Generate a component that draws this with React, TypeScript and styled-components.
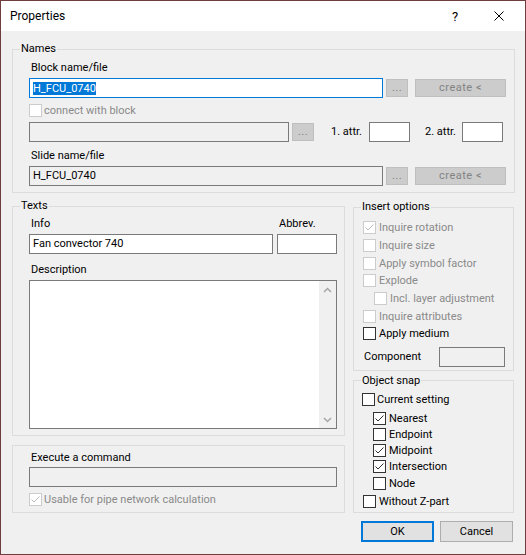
import React from "react";
import styled, { createGlobalStyle } from "styled-components";

const GlobalStyle = createGlobalStyle`
  * { box-sizing: border-box; }
  html, body { margin: 0; padding: 0; background: #f0f0f0; }
  body {
    font-family: Roboto, "Liberation Sans", Arial, sans-serif;
    font-size: 11px;
    color: #000;
  }
`;

const Window = styled.div`
  width: 526px;
  height: 555px;
  border: 1px solid #6e3d3d;
  background: #f0f0f0;
  display: flex;
  flex-direction: column;
  overflow: hidden;
`;

const TitleBar = styled.div`
  height: 30px;
  flex: none;
  background: #fff;
  display: flex;
  align-items: center;
  padding: 0 4px 0 9px;
`;

const Title = styled.div`
  flex: 1;
  font-size: 12px;
  line-height: 16px;
`;

const CaptionButton = styled.div`
  width: 44px;
  height: 30px;
  display: flex;
  align-items: center;
  justify-content: center;
  font-size: 13px;
`;

const Body = styled.div`
  flex: 1;
  padding: 10px 10px 0 11px;
  display: flex;
  flex-direction: column;
`;

const Group = styled.fieldset<{ $mt?: number }>`
  margin: ${(p) => p.$mt ?? 0}px 0 0;
  padding: 0;
  border: 1px solid #dcdcdc;
  min-width: 0;
`;

const Legend = styled.legend`
  margin-left: 7px;
  padding: 0 1px;
  font-size: 11px;
  line-height: 16px;
`;

const Content = styled.div<{ $pad: string }>`
  padding: ${(p) => p.$pad};
  display: flex;
  flex-direction: column;
`;

const Label = styled.div<{ $mt?: number }>`
  margin-top: ${(p) => p.$mt ?? 0}px;
  padding: 1px 0 0 2px;
  height: 16px;
  line-height: 15px;
  white-space: nowrap;
`;

const Row = styled.div<{ $mt?: number }>`
  display: flex;
  align-items: center;
  height: 20px;
  margin-top: ${(p) => p.$mt ?? 0}px;
`;

type Tone = "focus" | "white" | "flat";

const Field = styled.div<{ $w?: number; $tone?: Tone; $ml?: number }>`
  flex: none;
  width: ${(p) => (p.$w ? `${p.$w}px` : "auto")};
  height: 20px;
  margin-left: ${(p) => p.$ml ?? 0}px;
  padding-left: 3px;
  display: flex;
  align-items: center;
  border: 1px solid ${(p) => (p.$tone === "focus" ? "#0078d7" : "#7a7a7a")};
  background: ${(p) => (p.$tone === "flat" ? "#f0f0f0" : "#fff")};
  line-height: 16px;
  white-space: nowrap;
  overflow: hidden;
`;

const Selected = styled.span`
  background: #0078d7;
  color: #fff;
  line-height: 13px;
`;

const GrayButton = styled.div<{ $w: number; $ml: number }>`
  flex: none;
  width: ${(p) => p.$w}px;
  height: 18px;
  margin-left: ${(p) => p.$ml}px;
  background: #cccccc;
  border: 1px solid #bfbfbf;
  color: #838383;
  display: flex;
  align-items: center;
  justify-content: center;
  line-height: 16px;
  letter-spacing: 0.5px;
`;

const AttrLabel = styled.div<{ $w: number; $ml: number }>`
  flex: none;
  width: ${(p) => p.$w}px;
  margin-left: ${(p) => p.$ml}px;
  line-height: 16px;
  white-space: nowrap;
`;

const Columns = styled.div`
  display: grid;
  grid-template-columns: 333px 161px;
  column-gap: 8px;
  align-items: start;
`;

const Column = styled.div`
  display: flex;
  flex-direction: column;
`;

const InfoGrid = styled.div`
  display: grid;
  grid-template-columns: 244px 60px;
  grid-template-rows: 16px 20px;
  column-gap: 4px;
  row-gap: 3px;
`;

const TextArea = styled.div`
  margin-top: 3px;
  height: 149px;
  border: 1px solid #7a7a7a;
  background: #fff;
  display: flex;
  justify-content: flex-end;
`;

const ScrollBar = styled.div`
  width: 17px;
  background: #f0f0f0;
  display: flex;
  flex-direction: column;
  justify-content: space-between;
`;

const ScrollArrow = styled.div`
  height: 17px;
  display: flex;
  align-items: center;
  justify-content: center;
`;

const CheckRow = styled.div<{
  $h: number;
  $indent: number;
  $disabled?: boolean;
  $mt?: number;
}>`
  display: flex;
  align-items: center;
  height: ${(p) => p.$h}px;
  margin-top: ${(p) => p.$mt ?? 0}px;
  padding-left: ${(p) => p.$indent}px;
  color: ${(p) => (p.$disabled ? "#8a8a8a" : "#000")};
  white-space: nowrap;
`;

const Box = styled.span<{ $disabled?: boolean; $gap: number }>`
  flex: none;
  width: 13px;
  height: 13px;
  margin-right: ${(p) => p.$gap}px;
  border: 1px solid ${(p) => (p.$disabled ? "#cccccc" : "#333333")};
  background: #fff;
  display: flex;
  align-items: center;
  justify-content: center;
`;

const SubList = styled.div`
  display: flex;
  flex-direction: column;
  margin-top: 2.5px;
`;

const ComponentRow = styled(Row)`
  justify-content: space-between;
  padding-left: 1px;
`;

const ButtonBar = styled.div`
  display: flex;
  justify-content: flex-end;
  gap: 6px;
  margin-top: 8px;
  padding-right: 1px;
`;

const DialogButton = styled.button<{ $default?: boolean }>`
  width: 73px;
  height: 21px;
  margin: 0;
  padding: 0;
  font: inherit;
  color: #000;
  background: #e1e1e1;
  border: ${(p) => (p.$default ? "2px solid #0078d7" : "1px solid #adadad")};
`;

type CheckProps = {
  label: string;
  checked?: boolean;
  disabled?: boolean;
  indent?: number;
  h?: number;
  mt?: number;
  gap?: number;
};

function Check({
  label,
  checked,
  disabled,
  indent = 0,
  h = 16,
  mt,
  gap = 3,
}: CheckProps) {
  return (
    <CheckRow $h={h} $indent={indent} $disabled={disabled} $mt={mt}>
      <Box $disabled={disabled} $gap={gap}>
        {checked && (
          <svg width="11" height="11" viewBox="0 0 11 11">
            <polyline
              points="1.5,5.5 4,8 9.5,2.5"
              fill="none"
              stroke={disabled ? "#bcbcbc" : "#333"}
              strokeWidth="1"
            />
          </svg>
        )}
      </Box>
      {label}
    </CheckRow>
  );
}

function Chevron({ up }: { up?: boolean }) {
  return (
    <svg width="9" height="6" viewBox="0 0 9 6">
      <polyline
        points={up ? "1,5 4.5,1.5 8,5" : "1,1 4.5,4.5 8,1"}
        fill="none"
        stroke="#a6a6a6"
        strokeWidth="1.5"
      />
    </svg>
  );
}

const insertOptions = [
  { label: "Inquire rotation", checked: true, disabled: true },
  { label: "Inquire size", disabled: true },
  { label: "Apply symbol factor", disabled: true },
  { label: "Explode", disabled: true },
  { label: "Incl. layer adjustment", disabled: true, indent: 11 },
  { label: "Inquire attributes", disabled: true },
  { label: "Apply medium" },
];

const snapModes = [
  { label: "Nearest", checked: true },
  { label: "Endpoint" },
  { label: "Midpoint", checked: true },
  { label: "Intersection", checked: true },
  { label: "Node" },
];

export default function App() {
  return (
    <>
      <GlobalStyle />
      <Window>
        <TitleBar>
          <Title>Properties</Title>
          <CaptionButton>?</CaptionButton>
          <CaptionButton>
            <svg width="10" height="10" viewBox="0 0 10 10">
              <path d="M0.5 0.5 L9.5 9.5 M9.5 0.5 L0.5 9.5" stroke="#000" strokeWidth="1" />
            </svg>
          </CaptionButton>
        </TitleBar>

        <Body>
          <Group>
            <Legend>Names</Legend>
            <Content $pad="2px 8px 6px 16px">
              <Label>Block name/file</Label>
              <Row $mt={3}>
                <Field $w={354} $tone="focus">
                  <Selected>H_FCU_0740</Selected>
                </Field>
                <GrayButton $w={22} $ml={3}>...</GrayButton>
                <GrayButton $w={91} $ml={7}>create &lt;</GrayButton>
              </Row>
              <Check label="connect with block" disabled mt={4.5} gap={2} />
              <Row $mt={3.5}>
                <Field $w={260} $tone="flat" />
                <GrayButton $w={22} $ml={3}>...</GrayButton>
                <AttrLabel $w={38} $ml={17}>1. attr.</AttrLabel>
                <Field $w={41} $tone="white" />
                <AttrLabel $w={37} $ml={15}>2. attr.</AttrLabel>
                <Field $w={41} $tone="white" />
              </Row>
              <Label $mt={5}>Slide name/file</Label>
              <Row $mt={3}>
                <Field $w={354} $tone="flat">H_FCU_0740</Field>
                <GrayButton $w={22} $ml={3}>...</GrayButton>
                <GrayButton $w={91} $ml={7}>create &lt;</GrayButton>
              </Row>
            </Content>
          </Group>

          <Columns>
            <Column>
              <Group $mt={5}>
                <Legend>Texts</Legend>
                <Content $pad="1px 7px 6px 16px">
                  <InfoGrid>
                    <Label>Info</Label>
                    <Label>Abbrev.</Label>
                    <Field $tone="white">Fan convector 740</Field>
                    <Field $tone="white" />
                  </InfoGrid>
                  <Label $mt={7}>Description</Label>
                  <TextArea>
                    <ScrollBar>
                      <ScrollArrow>
                        <Chevron up />
                      </ScrollArrow>
                      <ScrollArrow>
                        <Chevron />
                      </ScrollArrow>
                    </ScrollBar>
                  </TextArea>
                </Content>
              </Group>

              <Group $mt={9}>
                <Content $pad="3px 7px 5px 16px">
                  <Label>Execute a command</Label>
                  <Row $mt={2}>
                    <Field $w={308} $tone="flat" />
                  </Row>
                  <Check
                    label="Usable for pipe network calculation"
                    checked
                    disabled
                    mt={4}
                    gap={2}
                  />
                </Content>
              </Group>
            </Column>

            <Column>
              <Group $mt={6}>
                <Legend>Insert options</Legend>
                <Content $pad="4px 8px 3px 9px">
                  {insertOptions.map((o) => (
                    <Check
                      key={o.label}
                      label={o.label}
                      checked={o.checked}
                      disabled={o.disabled}
                      indent={o.indent}
                      h={17.7}
                    />
                  ))}
                  <ComponentRow $mt={4}>
                    Component
                    <Field $w={66} $tone="flat" />
                  </ComponentRow>
                </Content>
              </Group>

              <Group $mt={2}>
                <Legend>Object snap</Legend>
                <Content $pad="3px 8px 2px 8px">
                  <Check label="Current setting" gap={2} />
                  <SubList>
                    {snapModes.map((m) => (
                      <Check
                        key={m.label}
                        label={m.label}
                        checked={m.checked}
                        indent={11}
                        h={16.2}
                      />
                    ))}
                  </SubList>
                  <Check label="Without Z-part" indent={1} mt={2.5} />
                </Content>
              </Group>

              <ButtonBar>
                <DialogButton $default>OK</DialogButton>
                <DialogButton>Cancel</DialogButton>
              </ButtonBar>
            </Column>
          </Columns>
        </Body>
      </Window>
    </>
  );
}
